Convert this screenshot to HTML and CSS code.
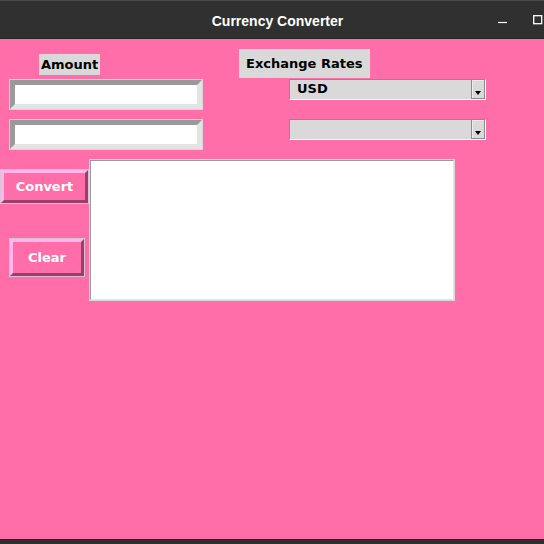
FILE: index.html
```html
<!DOCTYPE html>
<html>
<head>
<meta charset="utf-8">
<title>Currency Converter</title>
<link rel="stylesheet" href="styles.css">
</head>
<body>
<div class="titlebar">
  <div class="title">Currency Converter</div>
  <div class="controls">
    <svg class="ctl" width="10" height="10" viewBox="0 0 10 10"><line x1="0" y1="7.5" x2="9" y2="7.5" stroke="#fff" stroke-width="1.2"/></svg>
    <svg class="ctl" width="10" height="10" viewBox="0 0 10 10"><rect x="0.7" y="0.7" width="8" height="8" fill="none" stroke="#fff" stroke-width="1.3"/></svg>
  </div>
</div>
<div class="app">
  <div class="top">
    <div class="col-left">
      <div class="label label-amount">Amount</div>
      <div class="entry entry-first"><input class="entry-input" type="text"></div>
      <div class="entry entry-second"><input class="entry-input" type="text"></div>
    </div>
    <div class="col-right">
      <div class="label label-rates">Exchange Rates</div>
      <div class="combo combo-first">
        <span class="combo-text">USD</span>
        <span class="combo-btn"><span class="arrow"></span></span>
      </div>
      <div class="combo combo-second">
        <span class="combo-text"></span>
        <span class="combo-btn"><span class="arrow"></span></span>
      </div>
    </div>
  </div>
  <div class="bottom">
    <div class="btns">
      <button class="btn btn-convert">Convert</button>
      <button class="btn btn-clear">Clear</button>
    </div>
    <div class="textbox"><div class="textbox-inner"></div></div>
  </div>
</div>
<div class="footer"></div>
</body>
</html>
```
FILE: styles.css
```css
* { box-sizing: border-box; }
html, body { margin: 0; padding: 0; }
body {
  width: 544px;
  height: 544px;
  overflow: hidden;
  background: #ff6ea8;
  font-family: "DejaVu Sans", sans-serif;
  font-weight: bold;
  font-size: 13px;
}
.titlebar {
  height: 39px;
  background: #303030;
  border-top: 1px solid #4a4a4a;
  border-bottom: 1px solid #262626;
  display: flex;
  align-items: center;
  position: relative;
}
.title {
  flex: 1;
  text-align: center;
  color: #fff;
  font-family: "Liberation Sans", sans-serif;
  font-weight: bold;
  font-size: 14px;
  padding-left: 11px;
  padding-top: 2px;
}
.controls {
  position: absolute;
  right: 1px;
  top: 14px;
  display: flex;
  gap: 25px;
}
.app {
  height: 500px;
}
.top {
  display: flex;
  height: 111px;
}
.col-left {
  width: 203px;
  padding-left: 9px;
}
.label {
  background: #d9d9d9;
  color: #000;
  display: flex;
  align-items: center;
}
.label-amount {
  margin-top: 15px;
  margin-left: 30px;
  width: 61px;
  height: 21px;
  padding-left: 2px;
}
.entry {
  width: 194px;
  height: 31px;
  border: 1px solid #d6d6d6;
}
.entry-first { margin-top: 4px; }
.entry-second { margin-top: 9px; }
.entry-input {
  display: block;
  width: 100%;
  height: 100%;
  margin: 0;
  padding: 0;
  background: #fff;
  border-style: solid;
  border-width: 5px;
  border-color: #9a9a9a #e3e3e3 #e3e3e3 #9a9a9a;
  outline: none;
}
.col-right {
  margin-left: 36px;
}
.label-rates {
  margin-top: 10px;
  width: 131px;
  height: 29px;
  padding-left: 7px;
}
.combo {
  display: flex;
  width: 197px;
  height: 21px;
  margin-left: 50px;
  background: #d9d9d9;
  border-style: solid;
  border-width: 1px;
  border-color: #8c8c8c #ffffff #ffffff #8c8c8c;
}
.combo-first { margin-top: 1px; }
.combo-second { margin-top: 19px; }
.combo-text {
  flex: 1;
  padding-left: 7px;
  line-height: 18px;
  color: #000;
}
.combo-btn {
  width: 14px;
  border-left: 1px solid #8c8c8c;
  border-right: 1px solid #8c8c8c;
  border-bottom: 1px solid #8c8c8c;
  box-shadow: inset 1px 1px 0 #ececec;
  display: flex;
  align-items: flex-end;
  justify-content: center;
  padding-bottom: 3px;
}
.arrow {
  width: 0;
  height: 0;
  border-left: 3.5px solid transparent;
  border-right: 3.5px solid transparent;
  border-top: 4px solid #000;
}
.bottom {
  display: flex;
  margin-top: 9px;
}
.btns {
  width: 89px;
  display: flex;
  flex-direction: column;
}
.btn {
  font-family: "DejaVu Sans", sans-serif;
  font-weight: bold;
  font-size: 13px;
  color: #fff;
  background: #ff6ea8;
  margin: 0;
  padding: 0;
  border-style: solid;
  border-width: 3px;
  border-color: #ffb6ec #99406a #99406a #ffb6ec;
  box-shadow: 0 0 0 1px #d9c3d3;
  cursor: pointer;
}
.btn-convert {
  margin-top: 11px;
  margin-left: 1px;
  width: 87px;
  height: 33px;
}
.btn-clear {
  margin-top: 36px;
  margin-left: 10px;
  width: 74px;
  height: 37px;
}
.textbox {
  width: 366px;
  height: 142px;
  border: 1px solid #d9d9d9;
}
.textbox-inner {
  width: 100%;
  height: 100%;
  background: #fff;
  border-style: solid;
  border-width: 1px;
  border-color: #9a9a9a #e3e3e3 #e3e3e3 #9a9a9a;
}
.footer {
  height: 5px;
  background: #2f2f2f;
  border-top: 1px solid #222;
}
```
